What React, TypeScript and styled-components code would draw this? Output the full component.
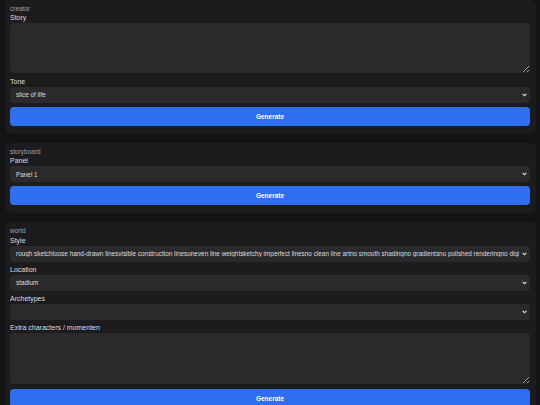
import React, { useState } from "react";
import styled, { createGlobalStyle } from "styled-components";

const GlobalStyle = createGlobalStyle`
  html, body {
    margin: 0;
    padding: 0;
    background: #141416;
    color-scheme: dark;
    font-family: "Liberation Sans", Arial, sans-serif;
  }
`;

const Page = styled.div`
  display: flex;
  flex-direction: column;
  gap: 9px;
  padding: 0 4px 0 5px;
`;

const Card = styled.section`
  display: flex;
  flex-direction: column;
  gap: 3.25px;
  background: #1c1c1f;
  border-radius: 6px;
  padding: 5px 6px 8px 5px;
`;

const CardTitle = styled.div`
  font-size: 6.5px;
  line-height: 6px;
  color: #a0a0a4;
  padding-top: 1px;
  margin-bottom: -2px;
`;

const Field = styled.label`
  display: flex;
  flex-direction: column;
`;

const FieldLabel = styled.span`
  font-size: 7px;
  font-weight: 400;
  line-height: 10px;
  color: #dcdce0;
`;

const TextArea = styled.textarea<{ $height?: number }>`
  box-sizing: border-box;
  display: block;
  height: ${({ $height }) => $height ?? 50}px;
  width: 100%;
  background: #2a2a2d;
  border: none;
  border-radius: 4px;
  color: #e4e4e6;
  font-family: inherit;
  font-size: 7px;
  padding: 4px 6px;
  outline: none;
`;

const SelectWrap = styled.div`
  position: relative;
  width: 100%;
`;

const Select = styled.select`
  box-sizing: border-box;
  appearance: none;
  -webkit-appearance: none;
  display: block;
  height: 16px;
  width: 100%;
  background: #2a2a2d;
  border: none;
  border-radius: 4px;
  color: #dcdcde;
  font-family: inherit;
  font-size: 6.4px;
  padding: 0 11px 0 6px;
  outline: none;
  text-overflow: clip;
  white-space: nowrap;
`;

const Chevron = styled.svg`
  position: absolute;
  right: 3px;
  top: 6px;
  width: 5px;
  height: 4px;
  pointer-events: none;
`;

const GenerateButton = styled.button`
  margin-top: 1px;
  height: 19px;
  width: 100%;
  border: none;
  border-radius: 4px;
  background: #2f6ef0;
  color: #ffffff;
  font-family: inherit;
  font-weight: bold;
  font-size: 6.5px;
  cursor: pointer;
`;

const styleText =
  "rough sketchloose hand-drawn linesvisible construction linesuneven line weightsketchy imperfect linesno clean line artno smooth shadingno gradientsno polished renderingno digital";

type DropdownProps = {
  value?: string;
  onChange?: (v: string) => void;
  options: { value: string; label: string }[];
};

const Dropdown: React.FC<DropdownProps> = ({ value, onChange, options }) => (
  <SelectWrap>
    <Select value={value} onChange={(e) => onChange?.(e.target.value)}>
      {options.map((o) => (
        <option key={o.value} value={o.value}>
          {o.label}
        </option>
      ))}
    </Select>
    <Chevron viewBox="0 0 5 4">
      <path d="M0.7 0.8 L2.5 2.8 L4.3 0.8" fill="none" stroke="#e6e6e8" strokeWidth="1.1" />
    </Chevron>
  </SelectWrap>
);

export default function App() {
  const [tone, setTone] = useState("slice of life");
  const [panel, setPanel] = useState("1");
  const [location, setLocation] = useState("stadium");
  const [style, setStyle] = useState("sketch");
  const [archetype, setArchetype] = useState("");

  return (
    <>
      <GlobalStyle />
      <Page>
        <Card>
          <CardTitle>creator</CardTitle>
          <Field>
            <FieldLabel>Story</FieldLabel>
            <TextArea $height={50} />
          </Field>
          <Field>
            <FieldLabel>Tone</FieldLabel>
            <Dropdown
              value={tone}
              onChange={setTone}
              options={[
                { value: "slice of life", label: "slice of life" },
                { value: "drama", label: "drama" },
                { value: "comedy", label: "comedy" },
              ]}
            />
          </Field>
          <GenerateButton>Generate</GenerateButton>
        </Card>

        <Card>
          <CardTitle>storyboard</CardTitle>
          <Field>
            <FieldLabel>Panel</FieldLabel>
            <Dropdown
              value={panel}
              onChange={setPanel}
              options={[
                { value: "1", label: "Panel 1" },
                { value: "2", label: "Panel 2" },
              ]}
            />
          </Field>
          <GenerateButton>Generate</GenerateButton>
        </Card>

        <Card>
          <CardTitle>world</CardTitle>
          <Field>
            <FieldLabel>Style</FieldLabel>
            <Dropdown
              value={style}
              onChange={setStyle}
              options={[{ value: "sketch", label: styleText }]}
            />
          </Field>
          <Field>
            <FieldLabel>Location</FieldLabel>
            <Dropdown
              value={location}
              onChange={setLocation}
              options={[
                { value: "stadium", label: "stadium" },
                { value: "school", label: "school" },
              ]}
            />
          </Field>
          <Field>
            <FieldLabel>Archetypes</FieldLabel>
            <Dropdown
              value={archetype}
              onChange={setArchetype}
              options={[{ value: "", label: "" }]}
            />
          </Field>
          <Field>
            <FieldLabel>Extra characters / momenten</FieldLabel>
            <TextArea $height={51} />
          </Field>
          <GenerateButton>Generate</GenerateButton>
        </Card>
      </Page>
    </>
  );
}
